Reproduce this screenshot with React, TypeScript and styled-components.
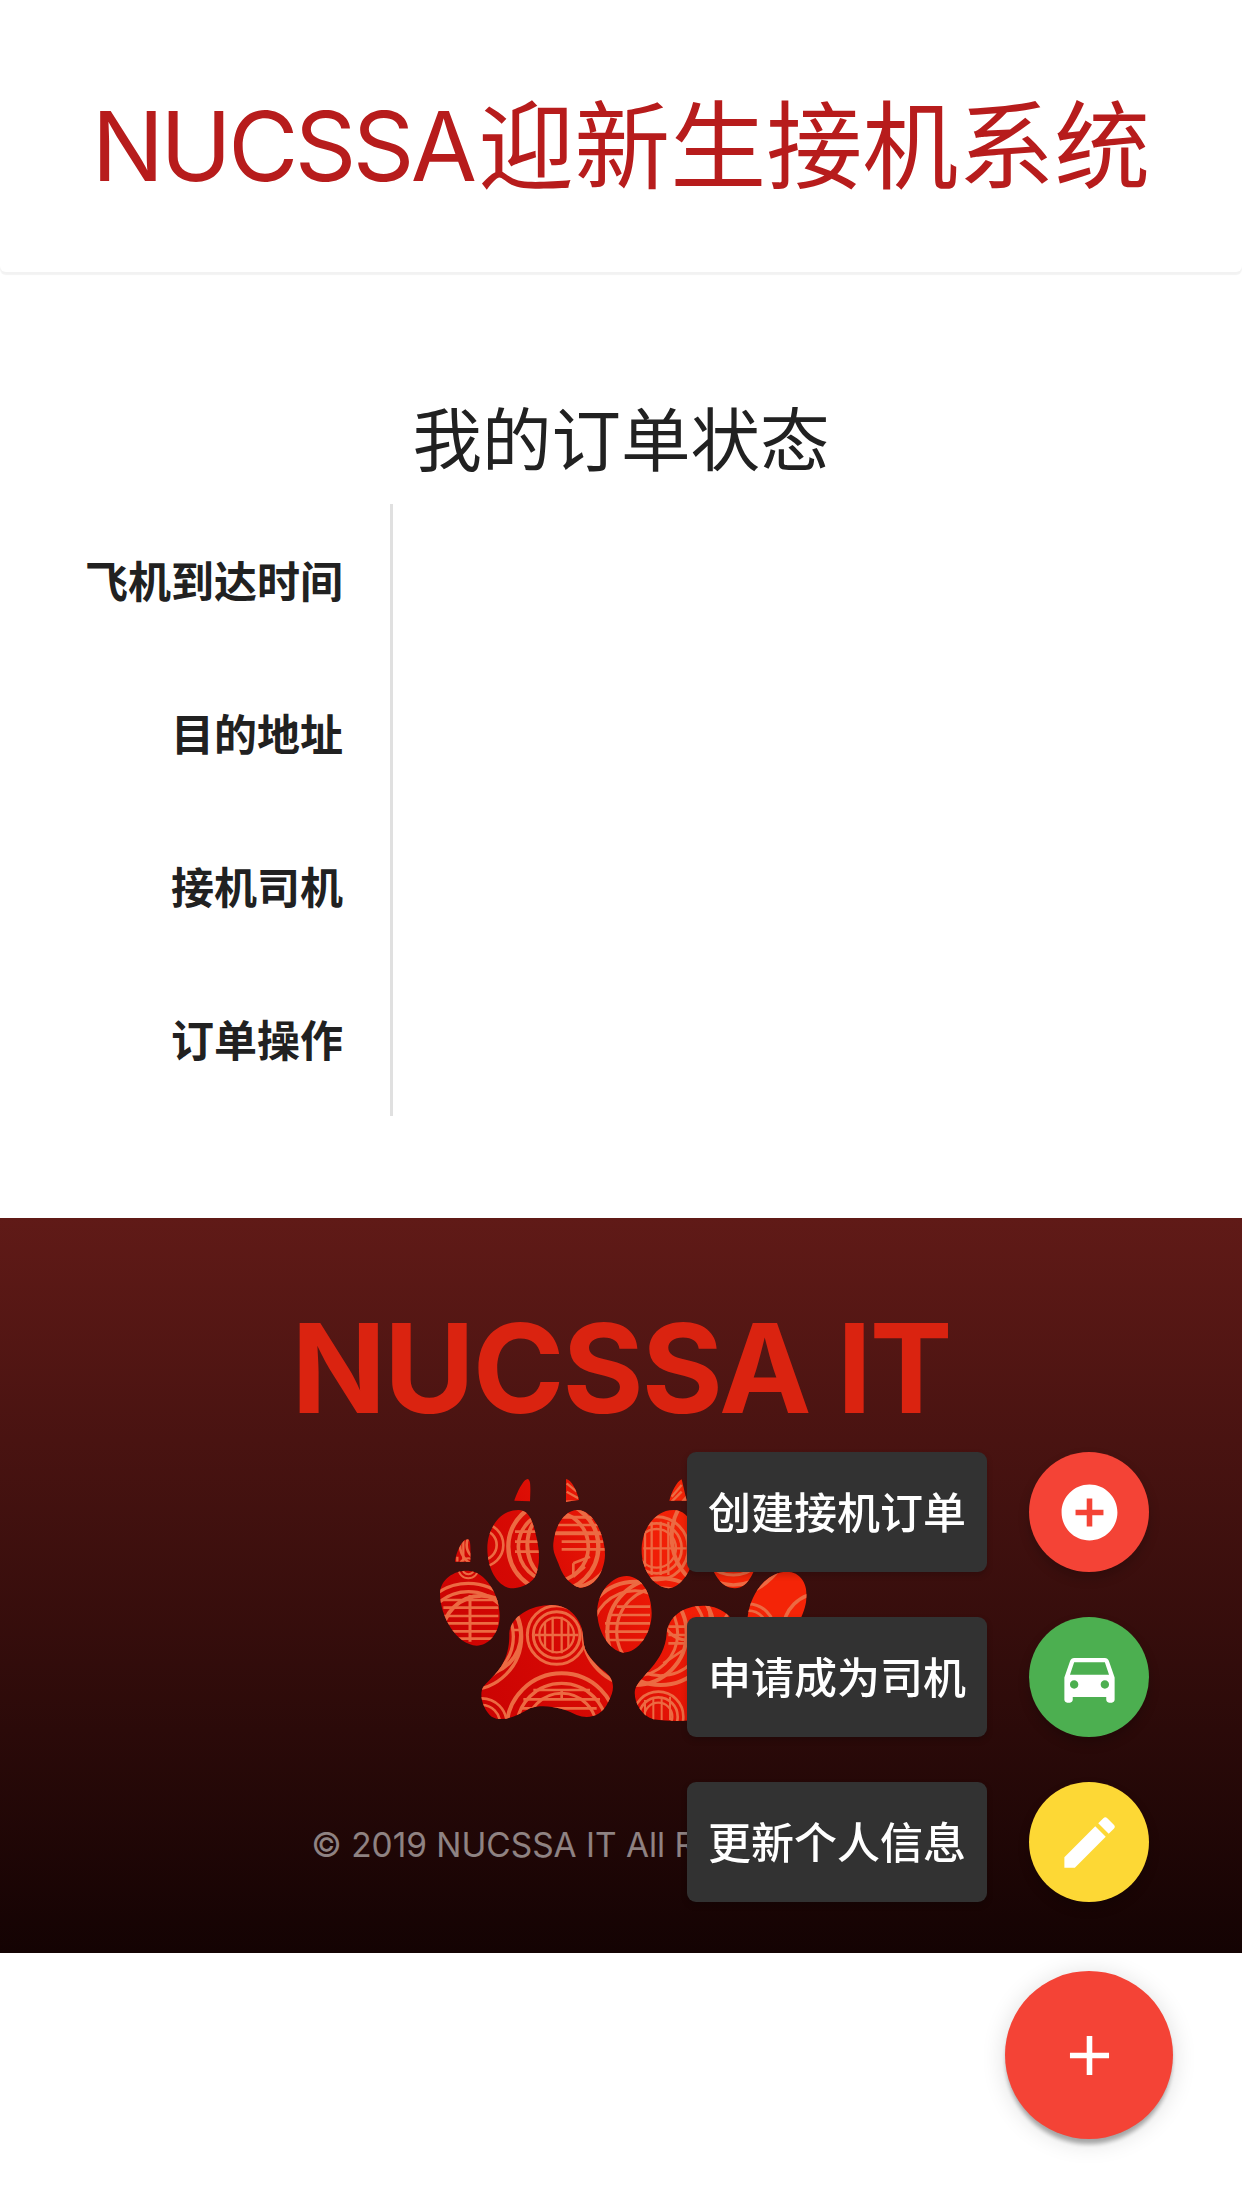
import React from 'react';
import styled, { createGlobalStyle } from 'styled-components';
import { MdAdd, MdAddCircle, MdDirectionsCar, MdEdit } from 'react-icons/md';

const GlobalStyle = createGlobalStyle`
  html, body {
    margin: 0;
    padding: 0;
    background: #fff;
    font-family: Inter, "Noto Sans CJK SC", sans-serif;
  }
  * { box-sizing: border-box; }
`;

const Page = styled.div`
  width: 1242px;
  min-height: 2208px;
  overflow: hidden;
  background: #fff;
`;

const Header = styled.header`
  height: 272px;
  padding-top: 20px;
  display: flex;
  align-items: center;
  justify-content: center;
  border-radius: 0 0 6px 6px;
  box-shadow: 0 3px 1px rgba(0, 0, 0, 0.05);
`;

const Title = styled.h1`
  margin: 0;
  font-size: 96px;
  line-height: 110px;
  font-weight: 400;
  color: #b71c1c;
  white-space: nowrap;
`;

const TitleLatin = styled.span`
  letter-spacing: -3.6px;
  margin-right: 5px;
`;

const Heading = styled.h2`
  margin: 131px 0 25px;
  font-size: 69.5px;
  line-height: 76px;
  font-weight: 400;
  text-align: center;
  color: #212121;
`;

const StatusTable = styled.table`
  width: 100%;
  border-collapse: separate;
  border-spacing: 0;
  table-layout: fixed;
`;

const RowHead = styled.th`
  width: 393px;
  height: 153px;
  padding: 3px 47px 0 0;
  border-right: 3px solid #e0e0e0;
  text-align: right;
  font-size: 43px;
  line-height: 50px;
  font-weight: 700;
  color: #212121;
`;

const Footer = styled.footer`
  height: 735px;
  margin-top: 102px;
  padding-top: 75px;
  display: flex;
  flex-direction: column;
  align-items: center;
  background: linear-gradient(180deg, #601a17 0%, #140303 100%);
`;

const FooterTitle = styled.div`
  font-size: 124px;
  line-height: 150px;
  font-weight: 700;
  letter-spacing: -2px;
  color: #da2310;
  white-space: nowrap;
`;

const Paw = styled.svg`
  display: block;
  width: 420px;
  height: 280px;
  margin-top: 17px;
`;

const Copyright = styled.div`
  margin-top: 80px;
  font-size: 33.4px;
  line-height: 50px;
  color: rgba(255, 255, 255, 0.5);
  white-space: nowrap;
`;

const ActionMenu = styled.div`
  position: fixed;
  right: 69px;
  bottom: 69px;
  display: flex;
  flex-direction: column;
  align-items: flex-end;
`;

const ActionList = styled.ul`
  list-style: none;
  margin: 0 24px 69px 0;
  padding: 0;
  display: flex;
  flex-direction: column;
  gap: 45px;
`;

const ActionItem = styled.li`
  display: flex;
  align-items: center;
  gap: 42px;
`;

const ActionLabel = styled.span`
  width: 300px;
  height: 120px;
  padding-bottom: 5px;
  display: flex;
  align-items: center;
  justify-content: center;
  border-radius: 9px;
  background: #323232;
  box-shadow: 0 3px 6px rgba(0, 0, 0, 0.2);
  font-size: 43px;
  font-weight: 500;
  color: #fff;
`;

const RoundButton = styled.button<{ $color: string; $size: number }>`
  width: ${(p) => p.$size}px;
  height: ${(p) => p.$size}px;
  padding: 0;
  border: none;
  border-radius: 50%;
  display: flex;
  align-items: center;
  justify-content: center;
  color: #fff;
  background: ${(p) => p.$color};
  box-shadow: ${(p) =>
    p.$size > 120
      ? '0 6px 4px -1px rgba(0,0,0,.3), 0 3px 24px rgba(0,0,0,.14)'
      : '0 6px 12px rgba(0,0,0,.2)'};
`;

const labels = ['飞机到达时间', '目的地址', '接机司机', '订单操作'];

const actions = [
  { text: '创建接机订单', color: '#f44336', Icon: MdAddCircle },
  { text: '申请成为司机', color: '#4caf50', Icon: MdDirectionsCar },
  { text: '更新个人信息', color: '#fdd835', Icon: MdEdit },
];

const pads = [
  'M105 305C108 280 125 238 143 238C152 240 152 255 151 305Z',
  'M60 400C62 355 105 330 145 332C195 335 238 400 239 465C240 520 205 557 170 557C110 555 60 470 60 400Z',
  'M283 122C290 100 310 57 323 57C332 60 332 75 330 124Z',
  'M202 265C202 205 240 150 295 150C330 150 340 190 350 235C360 280 360 320 345 350C330 375 295 385 272 385C230 378 202 325 202 265Z',
  'M438 57C455 60 470 90 477 120L438 125Z',
  'M400 250C405 195 435 150 472 150C520 150 555 225 555 285C553 340 520 383 480 383C445 375 425 340 415 310C405 285 398 275 400 250Z',
  'M268 520C272 470 330 435 395 435C450 435 490 480 490 540C490 575 520 610 555 635C585 660 585 690 565 725C545 770 505 778 470 765C430 745 375 730 330 745C295 765 250 790 215 770C190 750 175 705 190 680C215 650 270 620 268 520Z',
  'M532 450C535 395 575 348 620 348C665 350 695 400 695 460C695 520 655 578 610 578C565 570 530 510 532 450Z',
  'M748 122C755 95 770 65 785 58L800 122Z',
  'M665 265C668 200 710 150 760 150C810 150 830 210 825 270C820 330 780 385 745 385C700 380 663 330 665 265Z',
  'M865 250C865 170 900 120 940 120C985 120 1015 180 1015 250C1015 330 985 385 945 385C900 385 865 330 865 250Z',
  'M983 470C990 410 1030 345 1090 336C1140 330 1160 370 1160 405C1160 450 1130 520 1080 540L990 540Z',
  'M740 520C745 470 790 437 850 437C910 437 960 480 960 560L900 760C860 780 780 790 700 778C660 765 640 720 645 690C655 650 735 610 740 520Z',
];

// medallion rings of the red pattern: cx, cy, r, stroke width
const rings = [
  [145, 530, 160, 10], [145, 530, 135, 10], [145, 325, 30, 6], [145, 325, 18, 6],
  [400, 260, 135, 13], [400, 260, 105, 11], [185, 255, 65, 8], [185, 255, 45, 8],
  [450, 255, 128, 12],
  [410, 525, 88, 9], [410, 525, 70, 9], [410, 525, 52, 7],
  [425, 805, 165, 12], [425, 805, 135, 10], [425, 805, 105, 9],
  [185, 525, 118, 12],
  [185, 790, 75, 8], [185, 790, 55, 8],
  [722, 515, 160, 12], [722, 515, 132, 9],
  [710, 265, 95, 9], [710, 265, 75, 8], [710, 265, 58, 7],
  [645, 520, 155, 12], [645, 520, 128, 9],
  [715, 770, 75, 8], [715, 770, 58, 8], [715, 770, 42, 7],
  [940, 240, 135, 11], [940, 240, 105, 9],
  [930, 230, 175, 12], [1200, 510, 110, 11], [985, 510, 78, 9], [985, 510, 58, 8],
  [800, 470, 70, 9],
];

// straight bars of the pattern: x1, y1, x2, y2, stroke width
const bars = [
  [70, 420, 235, 420, 8], [70, 443, 235, 443, 8], [70, 468, 235, 468, 8],
  [70, 490, 235, 490, 8], [70, 514, 235, 514, 8], [100, 536, 220, 536, 8],
  [150, 405, 150, 545, 9], [112, 290, 112, 305, 7], [130, 240, 130, 305, 7],
  [285, 215, 360, 215, 8], [285, 245, 360, 245, 8], [285, 275, 360, 275, 8],
  [405, 172, 550, 172, 9], [405, 195, 550, 195, 8], [405, 220, 550, 220, 12],
  [425, 245, 550, 245, 8], [425, 268, 555, 268, 8],
  [510, 290, 460, 310, 8], [460, 310, 460, 350, 8], [460, 350, 495, 320, 8],
  [440, 70, 470, 95, 7], [440, 95, 475, 115, 7],
  [375, 485, 375, 565, 7], [398, 470, 398, 580, 7], [425, 470, 425, 580, 7], [445, 485, 445, 565, 7],
  [345, 525, 475, 525, 7],
  [340, 690, 510, 690, 8], [310, 718, 540, 718, 8], [425, 690, 425, 718, 8], [300, 745, 530, 745, 8],
  [275, 510, 305, 510, 7],
  [590, 440, 690, 440, 8], [565, 465, 690, 465, 8], [555, 490, 690, 490, 8],
  [555, 515, 690, 515, 8], [560, 540, 685, 540, 8],
  [675, 205, 675, 320, 7], [695, 185, 695, 345, 7], [722, 185, 722, 345, 7], [745, 185, 745, 345, 7],
  [670, 265, 800, 265, 7],
  [755, 110, 785, 75, 7], [755, 125, 785, 95, 7],
  [745, 500, 800, 500, 8], [745, 525, 800, 525, 8], [745, 550, 800, 550, 8], [730, 610, 790, 570, 8],
  [675, 720, 675, 780, 6], [700, 710, 700, 780, 6], [725, 710, 725, 780, 6], [750, 710, 750, 780, 6],
];

const PawDrawing = () => (
  <Paw viewBox="-27 0 1260 840" aria-hidden="true">
    <defs>
      <linearGradient id="pawRed" gradientUnits="userSpaceOnUse" x1="60" y1="600" x2="840" y2="200">
        <stop offset="0" stopColor="#c90202" />
        <stop offset="0.45" stopColor="#d80a04" />
        <stop offset="0.8" stopColor="#f01c06" />
        <stop offset="1" stopColor="#f42407" />
      </linearGradient>
      <clipPath id="pawPads">
        {pads.map((d) => (
          <path key={d} d={d} />
        ))}
      </clipPath>
    </defs>
    <g clipPath="url(#pawPads)">
      <rect x="0" y="0" width="1260" height="840" fill="url(#pawRed)" />
      <g fill="none" stroke="#ec6a42">
        {rings.map(([cx, cy, r, w], i) => (
          <circle key={i} cx={cx} cy={cy} r={r} strokeWidth={w} />
        ))}
        {bars.map(([x1, y1, x2, y2, w], i) => (
          <line key={i} x1={x1} y1={y1} x2={x2} y2={y2} strokeWidth={w} />
        ))}
      </g>
    </g>
  </Paw>
);

export default function App() {
  return (
    <Page>
      <GlobalStyle />
      <Header>
        <Title>
          <TitleLatin>NUCSSA</TitleLatin>迎新生接机系统
        </Title>
      </Header>
      <main>
        <Heading>我的订单状态</Heading>
        <StatusTable>
          <tbody>
            {labels.map((label) => (
              <tr key={label}>
                <RowHead scope="row">{label}</RowHead>
                <td />
              </tr>
            ))}
          </tbody>
        </StatusTable>
      </main>
      <Footer>
        <FooterTitle>NUCSSA IT</FooterTitle>
        <PawDrawing />
        <Copyright>© 2019 NUCSSA IT All Rights Reserved</Copyright>
      </Footer>
      <ActionMenu>
        <ActionList>
          {actions.map(({ text, color, Icon }) => (
            <ActionItem key={text}>
              <ActionLabel>{text}</ActionLabel>
              <RoundButton $color={color} $size={120}>
                <Icon size={67} />
              </RoundButton>
            </ActionItem>
          ))}
        </ActionList>
        <RoundButton $color="#f44336" $size={168}>
          <MdAdd size={67} />
        </RoundButton>
      </ActionMenu>
    </Page>
  );
}
